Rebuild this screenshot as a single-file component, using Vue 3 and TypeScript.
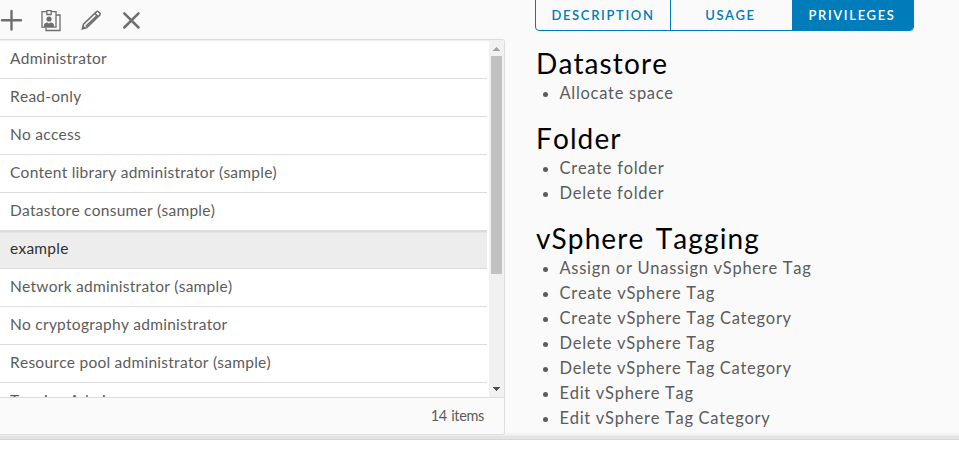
<script setup lang="ts">
interface Role {
  name: string
  selected?: boolean
}
interface PrivilegeGroup {
  title: string
  privileges: string[]
}

const roles: Role[] = [
  { name: 'Administrator' },
  { name: 'Read-only' },
  { name: 'No access' },
  { name: 'Content library administrator (sample)' },
  { name: 'Datastore consumer (sample)' },
  { name: 'example', selected: true },
  { name: 'Network administrator (sample)' },
  { name: 'No cryptography administrator' },
  { name: 'Resource pool administrator (sample)' },
  { name: 'Tagging Admin' },
]

const tabs: string[] = ['Description', 'Usage', 'Privileges']
const activeTab = 'Privileges'

const groups: PrivilegeGroup[] = [
  { title: 'Datastore', privileges: ['Allocate space'] },
  { title: 'Folder', privileges: ['Create folder', 'Delete folder'] },
  {
    title: 'vSphere Tagging',
    privileges: [
      'Assign or Unassign vSphere Tag',
      'Create vSphere Tag',
      'Create vSphere Tag Category',
      'Delete vSphere Tag',
      'Delete vSphere Tag Category',
      'Edit vSphere Tag',
      'Edit vSphere Tag Category',
    ],
  },
]
</script>

<template>
  <div class="page">
    <main class="workspace">
      <section class="roles">
        <div class="toolbar">
          <svg class="icon" viewBox="0 0 24 24"><path d="M12.500 3v18.500M3 12.300h19" stroke-width="2.400" stroke-linecap="round" /></svg>
          <svg class="icon" viewBox="0 0 24 24">
            <path d="M7.500 3.700h-4.500v15.500h14v-15.500h-4.500M17.500 7h3.500v15.500H7V20" />
            <path d="M7.800 2.700h4.400v3.800h-4.400z" />
            <circle class="solid" cx="10" cy="11" r="2.600" />
            <path class="solid" d="M5 19v-2c0-1.500 1.800-2.500 3.200-2.500l1.800.9 1.800-.9c1.400 0 3.200 1 3.200 2.500v2z" />
          </svg>
          <svg class="icon" viewBox="0 0 24 24">
            <path d="M3.300 21l1.200-4.800L17.600 3.600q.8-.8 1.600 0l1.700 1.700q.8.8 0 1.600L7.900 19.700zM15.800 5.400l3.200 3.200M17.300 8.200L6.800 18.400" stroke-width="1.500" />
            <path class="solid" d="M3 21.300l1-4 3.200 3z" />
          </svg>
          <svg class="icon" viewBox="0 0 24 24"><path d="M5.300 5.300L19.500 19.500M19.500 5.300L5.300 19.500" stroke-width="2.500" stroke-linecap="round" /></svg>
        </div>
        <div class="grid">
          <div class="viewport">
            <div class="rows">
              <div v-for="role in roles" :key="role.name" class="row" :class="{ selected: role.selected }">{{ role.name }}</div>
            </div>
            <div class="scrollbar">
              <svg class="arrow up" viewBox="0 0 7 4"><path d="M3 0h1v1h1v1h1v1h1v1H0V3h1V2h1V1h1z" /></svg>
              <div class="thumb"></div>
              <svg class="arrow down" viewBox="0 0 7 4"><path d="M0 0h7v1H6v1H5v1H4v1H3V3H2V2H1V1H0z" /></svg>
            </div>
          </div>
          <footer class="footer"><span>14 items</span></footer>
        </div>
      </section>
      <section class="details">
        <nav class="tabs">
          <button v-for="tab in tabs" :key="tab" class="tab" :class="[tab.toLowerCase(), { active: tab === activeTab }]">{{ tab }}</button>
        </nav>
        <div class="privileges">
          <div v-for="group in groups" :key="group.title">
            <h3>{{ group.title }}</h3>
            <ul>
              <li v-for="item in group.privileges" :key="item">{{ item }}</li>
            </ul>
          </div>
        </div>
      </section>
    </main>
    <div class="splitter"></div>
  </div>
</template>

<style>
body {
  background: #fff;
  overflow: hidden;
}
</style>

<style scoped>
.page {
  height: 456px;
  overflow: hidden;
  font-family: Lato, sans-serif;
  font-kerning: none;
  color: #5c5c5c;
}
.workspace {
  display: flex;
  height: 436px;
  overflow: hidden;
  background: linear-gradient(#fafafa 431px, #eee 436px);
}
.roles {
  width: 505px;
  flex: none;
}
.toolbar {
  display: flex;
  gap: 16px;
  height: 39px;
  padding-top: 8px;
  margin-left: -1px;
  box-sizing: border-box;
}
.icon {
  width: 24px;
  height: 24px;
  flex: none;
  fill: none;
  stroke: #6e6e6e;
  stroke-width: 1.3;
}
.icon .solid {
  fill: #6e6e6e;
  stroke: none;
}
.grid {
  height: 396px;
  box-sizing: border-box;
  border: 1px solid #ddd;
  border-left: 0;
  border-radius: 0 3px 3px 0;
  overflow: hidden;
}
.viewport {
  display: flex;
  height: 357px;
  background: #fff;
  overflow: hidden;
  box-shadow: inset 0 1px #eee;
}
.rows {
  width: 487px;
  padding-top: 1px;
}
.row {
  height: 38px;
  box-sizing: border-box;
  padding-left: 10px;
  border-bottom: 1px solid #ddd;
  font-size: 15.5px;
  line-height: 34px;
  letter-spacing: 0.25px;
  white-space: nowrap;
}
.row.selected {
  color: #313131;
  background: #ededed;
  box-shadow: inset 0 1px #dcdcdc, inset 0 2px #e6e6e6, 0 -1px #dcdcdc;
}
.scrollbar {
  display: flex;
  flex-direction: column;
  align-items: center;
  width: 15px;
  margin-left: 2px;
  padding: 7px 0 6px;
  box-sizing: border-box;
  background: #f1f1f1;
}
.arrow {
  width: 7px;
  height: 4px;
  fill: #a3a3a3;
}
.thumb {
  width: 11px;
  height: 218px;
  margin: 5px 0 auto;
  background: #c1c1c1;
}
.arrow.down {
  fill: #505050;
}
.footer {
  height: 37px;
  box-sizing: border-box;
  padding-right: 20px;
  border-top: 1px solid #ddd;
  background: #fafafa;
  text-align: right;
  font-size: 14.5px;
  line-height: 35px;
  letter-spacing: -0.35px;
  word-spacing: 1px;
}
.details {
  flex: 1;
  padding-left: 30px;
}
.tabs {
  display: flex;
  width: 379px;
  height: 36px;
  margin-top: -5px;
  box-sizing: border-box;
  border: 1px solid #007cbb;
  border-radius: 4px;
  overflow: hidden;
}
.tab {
  padding: 4px 0 0;
  border: 0;
  border-right: 1px solid #007cbb;
  background: transparent;
  color: #007cbb;
  font: 600 13px/30px Lato, sans-serif;
  letter-spacing: 1.65px;
  text-transform: uppercase;
  text-align: center;
}
.tab.description {
  width: 135px;
}
.tab.usage {
  width: 122px;
  padding-right: 2px;
}
.tab.active {
  flex: 1;
  padding-right: 2px;
  border-right: 0;
  background: #007cbb;
  color: #fff;
}
h3 {
  height: 50px;
  margin: 0;
  padding-left: 1px;
  color: #000;
  font-size: 28px;
  line-height: 64px;
  font-weight: 400;
  letter-spacing: 1.1px;
  word-spacing: 3px;
}
ul {
  margin: 0;
  padding-left: 24.5px;
}
li {
  height: 25px;
  font-size: 16.5px;
  line-height: 25px;
  letter-spacing: 0.7px;
}
.splitter {
  height: 4px;
  box-sizing: border-box;
  border-top: 1px solid #e0e0e0;
  border-bottom: 1px solid #d6d6d6;
  background: #e5e5e5;
}
</style>
